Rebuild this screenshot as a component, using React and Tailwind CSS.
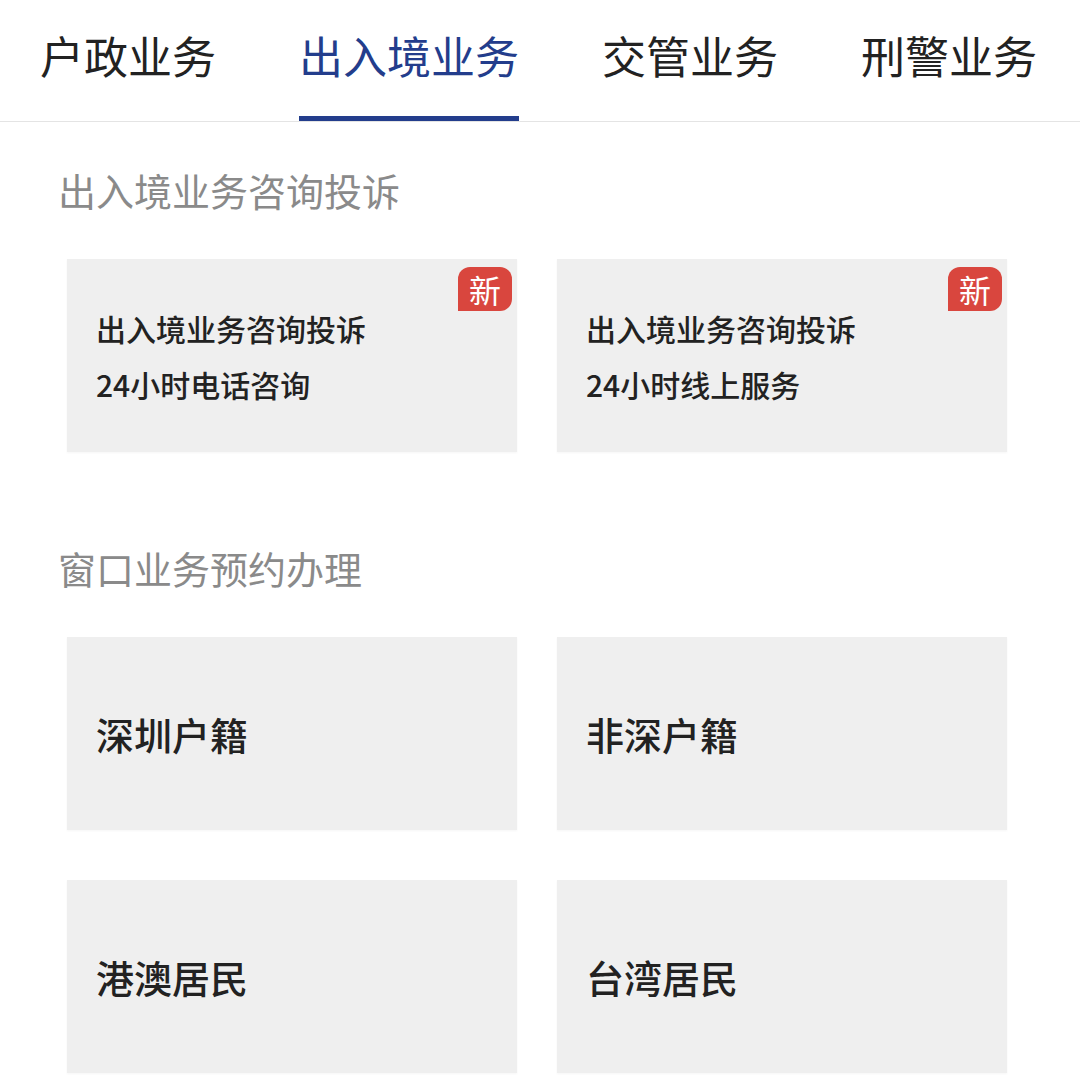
import React from "react";

const tabs = ["户政业务", "出入境业务", "交管业务", "刑警业务"];

const Badge = () => (
  <div className="absolute top-[8px] right-[5px] w-[54px] h-[44px] bg-[#d9463e] text-white text-[32px] leading-none flex items-center justify-center rounded-tl-[12px] rounded-tr-[12px] rounded-br-[12px]">
    新
  </div>
);

const InfoCard = ({ line2 }) => (
  <div className="relative h-[193px] bg-[#efefef] shadow-[0_1px_2px_rgba(0,0,0,0.04)] flex flex-col justify-center pl-[29px]">
    <Badge />
    <div className="text-[30px] leading-[56px] font-medium text-[#222]">出入境业务咨询投诉</div>
    <div className="text-[30px] leading-[56px] font-medium text-[#222]">{line2}</div>
  </div>
);

const BigCard = ({ title }) => (
  <div className="h-[193px] bg-[#efefef] shadow-[0_1px_2px_rgba(0,0,0,0.04)] flex items-center pl-[29px]">
    <span className="text-[38px] leading-none font-medium text-[#222]">{title}</span>
  </div>
);

export default function App() {
  return (
    <div className="w-[1080px] h-[1080px] bg-white overflow-hidden font-['Noto_Sans_CJK_SC','Noto_Sans',sans-serif]">
      {/* tabs */}
      <div className="flex justify-between pl-[40px] pr-[43px] h-[122px] border-b border-[#e4e4e4]">
        {tabs.map((t, i) => (
          <div key={t} className="flex flex-col h-full">
            <div
              className={
                "pt-[33px] text-[44px] leading-[44px] " +
                (i === 1 ? "text-[#233d8c]" : "text-[#222]")
              }
            >
              {t}
            </div>
            <div className={"mt-auto h-[5px] " + (i === 1 ? "bg-[#233d8c]" : "bg-transparent")} />
          </div>
        ))}
      </div>

      <div className="pl-[58px] pt-[49px] text-[38px] leading-[38px] text-[#8a8a8a]">出入境业务咨询投诉</div>

      <div className="grid grid-cols-2 gap-x-[40px] pl-[67px] pr-[73px] mt-[50px]">
        <InfoCard line2="24小时电话咨询" />
        <InfoCard line2="24小时线上服务" />
      </div>

      <div className="pl-[58px] pt-[97px] text-[38px] leading-[38px] text-[#8a8a8a]">窗口业务预约办理</div>

      <div className="grid grid-cols-2 gap-x-[40px] gap-y-[50px] pl-[67px] pr-[73px] mt-[50px]">
        <BigCard title="深圳户籍" />
        <BigCard title="非深户籍" />
        <BigCard title="港澳居民" />
        <BigCard title="台湾居民" />
      </div>
    </div>
  );
}
